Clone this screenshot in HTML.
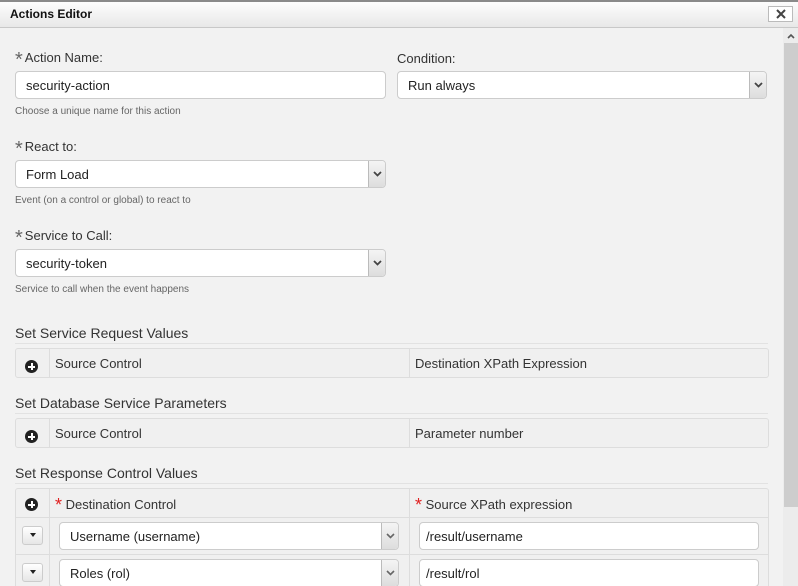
<!DOCTYPE html>
<html><head><style>
*{box-sizing:border-box;margin:0;padding:0}
html,body{width:798px;height:586px;overflow:hidden}
body{background:#f2f2f2;font-family:"Liberation Sans",Arial,sans-serif;position:relative;color:#333}
.a{position:absolute}
.hdr{left:0;top:0;width:798px;height:28px;background:linear-gradient(#fdfdfd,#e8e8e8);border-top:2px solid #8a8a8a;border-bottom:1px solid #c8c8c8}
.hdr b{position:absolute;left:10px;top:5px;font-size:12px;color:#111}
.x{left:768px;top:6px;width:25px;height:16px;border:1px solid #bbb;background:#fff}
.sb{left:783px;top:28px;width:15px;height:558px;background:#ececec}
.th{left:784px;top:43px;width:14px;height:464px;background:#cdcdcd}
.lbl{font-size:13px;color:#333}
.lbl i{font-style:normal;font-size:20px;color:#666;position:relative;top:4px;margin-right:2px}
.hint{font-size:10px;color:#666}
.in{background:#fff;border:1px solid #ccc;border-radius:4px;font-size:13px;color:#222;padding:1px 0 0 10px;line-height:26px}
.ar{position:absolute;right:0;top:0;width:17px;height:100%;border-left:1px solid #bbb;background:linear-gradient(#f4f4f4,#ddd);border-radius:0 3px 3px 0}
.ar svg{position:absolute;left:4px;top:50%;margin-top:-3px}
.sec{font-size:14px;color:#333}
.ln{height:1px;background:#e2e2e2}
.tb{border:1px solid #ddd;border-radius:3px;background:#f0f0f0}
.vl{width:1px;background:#ddd}
.cell{font-size:13px;color:#333}
.plus{width:13px;height:13px;border-radius:50%;background:#222}
.plus:before{content:"";position:absolute;left:3px;top:6px;width:7px;height:2px;background:#fff}
.plus:after{content:"";position:absolute;left:6px;top:3px;width:2px;height:7px;background:#fff}
.btn{width:21px;height:19px;border:1px solid #ccc;border-radius:3px;background:linear-gradient(#fff,#e6e6e6)}
.btn:after{content:"";position:absolute;left:7px;top:6px;border:3px solid transparent;border-top:4px solid #222}
.star{color:#e02020;font-size:18px;position:relative;top:2px}
</style></head><body>
<div class="a hdr"><b>Actions Editor</b></div>
<div class="a x"><svg class="a" style="left:7px;top:2px" width="10" height="10"><path d="M1 1L9 9M9 1L1 9" stroke="#444" stroke-width="2"/></svg></div>
<div class="a sb"></div><div class="a th"></div>
<svg class="a" style="left:787px;top:33px" width="8" height="6"><path d="M1 5L4 2L7 5" stroke="#555" stroke-width="1.6" fill="none"/></svg>

<div class="a lbl" style="left:15px;top:45px"><i>*</i>Action Name:</div>
<div class="a in" style="left:15px;top:71px;width:371px;height:28px">security-action</div>
<div class="a hint" style="left:15px;top:106px">Choose a unique name for this action</div>
<div class="a lbl" style="left:397px;top:51px">Condition:</div>
<div class="a in" style="left:397px;top:71px;width:370px;height:28px">Run always<div class="ar"><svg width="9" height="6"><path d="M1 1L4.5 4.5L8 1" stroke="#444" stroke-width="1.8" fill="none"/></svg></div></div>

<div class="a lbl" style="left:15px;top:134px"><i>*</i>React to:</div>
<div class="a in" style="left:15px;top:160px;width:371px;height:28px">Form Load<div class="ar"><svg width="9" height="6"><path d="M1 1L4.5 4.5L8 1" stroke="#444" stroke-width="1.8" fill="none"/></svg></div></div>
<div class="a hint" style="left:15px;top:195px">Event (on a control or global) to react to</div>

<div class="a lbl" style="left:15px;top:223px"><i>*</i>Service to Call:</div>
<div class="a in" style="left:15px;top:249px;width:371px;height:28px">security-token<div class="ar"><svg width="9" height="6"><path d="M1 1L4.5 4.5L8 1" stroke="#444" stroke-width="1.8" fill="none"/></svg></div></div>
<div class="a hint" style="left:15px;top:284px">Service to call when the event happens</div>

<div class="a sec" style="left:15px;top:325px">Set Service Request Values</div>
<div class="a ln" style="left:15px;top:343px;width:753px"></div>
<div class="a tb" style="left:15px;top:348px;width:754px;height:30px"></div>
<div class="a vl" style="left:49px;top:349px;height:28px"></div>
<div class="a vl" style="left:409px;top:349px;height:28px"></div>
<div class="a plus" style="left:25px;top:360px"></div>
<div class="a cell" style="left:55px;top:356px">Source Control</div>
<div class="a cell" style="left:415px;top:356px">Destination XPath Expression</div>

<div class="a sec" style="left:15px;top:395px">Set Database Service Parameters</div>
<div class="a ln" style="left:15px;top:413px;width:753px"></div>
<div class="a tb" style="left:15px;top:418px;width:754px;height:30px"></div>
<div class="a vl" style="left:49px;top:419px;height:28px"></div>
<div class="a vl" style="left:409px;top:419px;height:28px"></div>
<div class="a plus" style="left:25px;top:430px"></div>
<div class="a cell" style="left:55px;top:426px">Source Control</div>
<div class="a cell" style="left:415px;top:426px">Parameter number</div>

<div class="a sec" style="left:15px;top:465px">Set Response Control Values</div>
<div class="a ln" style="left:15px;top:483px;width:753px"></div>
<div class="a tb" style="left:15px;top:488px;width:754px;height:104px"></div>
<div class="a vl" style="left:49px;top:489px;height:97px"></div>
<div class="a vl" style="left:409px;top:489px;height:97px"></div>
<div class="a ln" style="left:16px;top:517px;width:752px;background:#ddd"></div>
<div class="a ln" style="left:16px;top:554px;width:752px;background:#ddd"></div>
<div class="a plus" style="left:25px;top:498px"></div>
<div class="a cell" style="left:55px;top:493px"><span class="star">*</span> Destination Control</div>
<div class="a cell" style="left:415px;top:493px"><span class="star">*</span> Source XPath expression</div>

<div class="a btn" style="left:22px;top:526px"></div>
<div class="a in" style="left:59px;top:522px;width:340px;height:28px">Username (username)<div class="ar"><svg width="9" height="6"><path d="M1 1L4.5 4.5L8 1" stroke="#666" stroke-width="1.6" fill="none"/></svg></div></div>
<div class="a in" style="left:419px;top:522px;width:340px;height:28px;padding-left:6px">/result/username</div>

<div class="a btn" style="left:22px;top:563px"></div>
<div class="a in" style="left:59px;top:559px;width:340px;height:28px">Roles (rol)<div class="ar"><svg width="9" height="6"><path d="M1 1L4.5 4.5L8 1" stroke="#666" stroke-width="1.6" fill="none"/></svg></div></div>
<div class="a in" style="left:419px;top:559px;width:340px;height:28px;padding-left:6px">/result/rol</div>
</body></html>
